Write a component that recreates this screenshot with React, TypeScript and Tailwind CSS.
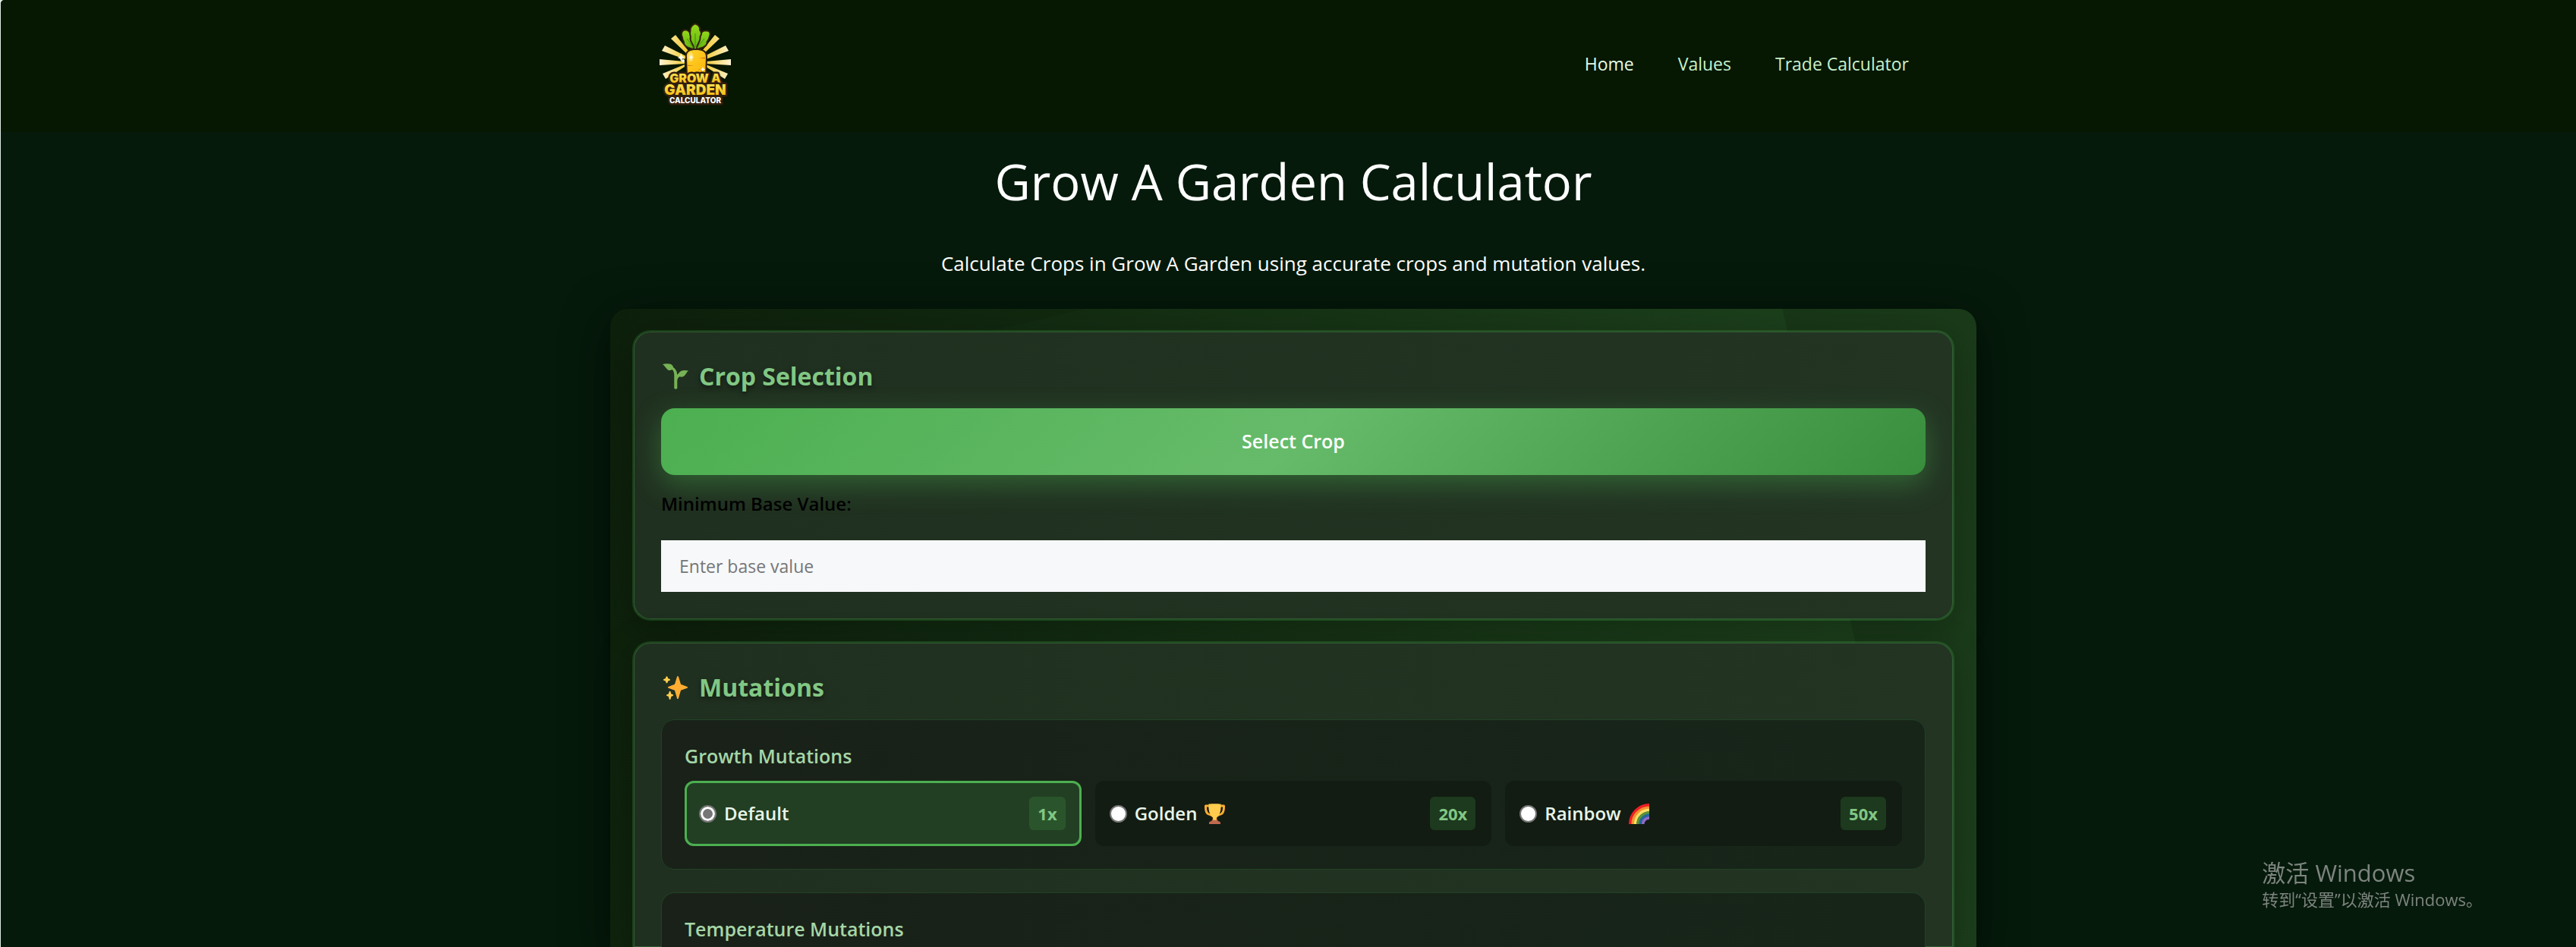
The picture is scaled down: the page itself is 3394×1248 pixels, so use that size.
import { useState } from "react";
import type { ReactNode } from "react";

function Logo() {
  const rays = [
    "M40 46 L20 27 L26 22 L43 43Z",
    "M38 54 L8 43 L12 36 L40 50Z",
    "M38 60 L5 62 L5 54 L38 57Z",
    "M38 64 L13 80 L9 73 L38 61Z",
  ];
  return (
    <svg viewBox="0 0 104 120" className="h-[120px] w-[104px]" role="img" aria-label="Grow A Garden Calculator">
      <defs>
        <linearGradient id="ray" gradientUnits="userSpaceOnUse" x1="5" y1="0" x2="42" y2="0">
          <stop offset="0" stopColor="#fdf3d3" />
          <stop offset="0.5" stopColor="#f7dd7c" />
          <stop offset="1" stopColor="#f3c92c" />
        </linearGradient>
        <linearGradient id="root-fill" x1="0" y1="0" x2="1" y2="1">
          <stop offset="0" stopColor="#ffd32c" />
          <stop offset="1" stopColor="#fbb50a" />
        </linearGradient>
        <linearGradient id="leaf" x1="0" y1="0" x2="0" y2="1">
          <stop offset="0" stopColor="#93d81a" />
          <stop offset="1" stopColor="#62b510" />
        </linearGradient>
        <linearGradient id="word" x1="0" y1="0" x2="0" y2="1">
          <stop offset="0.2" stopColor="#fbe14a" />
          <stop offset="0.9" stopColor="#f8b90e" />
        </linearGradient>
      </defs>
      <g fill="url(#ray)">
        {rays.map((d) => (
          <path key={d} d={d} />
        ))}
        <g transform="translate(104 0) scale(-1 1)">
          {rays.map((d) => (
            <path key={d} d={d} />
          ))}
        </g>
      </g>
      <g fill="url(#leaf)" stroke="#33200f" strokeWidth="4" strokeLinejoin="round" paintOrder="stroke">
        <path d="M49.500 40 C44 38 38.500 37 38 32.500 C38.500 30 35.500 28 36 25 C34 21 35 17 38.500 16.500 C42 16 44.500 19 44.500 22 C47.500 25 46.500 28 47.500 31 C49 34 50 37 49.500 40Z" />
        <path d="M54 40 C60 38 66 37 66.500 32.500 C66 30 69.500 28 69.500 25 C71.500 21 71 17.500 67 17.500 C63 17 60 19 60 23 C57 26 57.500 28 57 31 C55 34 54 37 54 40Z" />
        <path d="M51 40 C51 34 47 32 46.500 27 C48 24 45 21 46.500 17 C46 12 49 10 51.500 8.500 C55 9 58 12 57 16 C60 19 59 22 57.500 24 C58.500 30 53 34 53 40Z" />
      </g>
      <path d="M52 20V39M41 27L50 39M64 27L54 39" fill="none" stroke="#3d7d10" strokeWidth="0.800" />
      <path
        d="M42 76 L41 52 C40 44 45 42 53 42 C61 42 66.500 44 66 52 L65 76Z"
        fill="url(#root-fill)"
        stroke="#33200f"
        strokeWidth="4"
        paintOrder="stroke"
      />
      <path d="M41.500 61.500 L51 62.500 L41.500 63Z M65.500 51.500 L57 52.500 L65 53.500Z M63 69L55 67L63 67Z" fill="#d97f14" />
      <ellipse cx="46" cy="51" rx="3.500" ry="6" fill="#ffe583" opacity="0.800" />
      <path
        d="M33.500 46 L35 50 L38 52 L35 53.500 L33.500 57 L32 53.500 L29 52 L32 50Z M46.500 48 L47.500 50.500 L50 51.500 L47.500 52.500 L46.500 55 L45.500 52.500 L43 51.500 L45.500 50.500Z M62 64 L63 66.500 L65.500 67.500 L63 68.500 L62 71 L61 68.500 L58.500 67.500 L61 66.500Z"
        fill="#fffbe6"
      />
      <circle cx="36" cy="56" r="2" fill="#fffbe6" />
      <g
        fontFamily="Inter, sans-serif"
        fontWeight="900"
        textAnchor="middle"
        stroke="#33200f"
        strokeWidth="5"
        strokeLinejoin="round"
        paintOrder="stroke"
      >
        <text x="52" y="85" fontSize="16" fill="url(#word)">
          GROW A
        </text>
        <text x="52" y="101" fontSize="19" fill="url(#word)">
          GARDEN
        </text>
        <text x="52" y="112" fontSize="10" fontWeight="800" fill="#ffffff">
          CALCULATOR
        </text>
      </g>
    </svg>
  );
}

function SproutIcon() {
  return (
    <svg viewBox="0 0 34 34" className="ml-0.5 size-[34px]" aria-hidden="true">
      <path
        fill="#77b255"
        d="M0 1 C4 0 8 0 11 1 C13 2 14 4 14 5 C17 7 19 10 19.300 15 C20.500 13.500 21.500 12.500 22 12 C23 10 26 9 29 9 L34 9.500 C32 11 31 14 29 16 C27 18 24 18 22.500 17.300 C20.500 18.500 19.300 20.500 19.300 23 L19.300 33 Q17.300 34.500 15.300 33 L15.300 16 C15.300 12 14.500 9.500 12.500 8 C10.500 9.600 7.500 9.500 6 7.500 C4 5.500 2.500 3 0 1Z"
      />
    </svg>
  );
}

function SparklesIcon() {
  return (
    <svg viewBox="0 0 36 36" className="ml-0.5 size-[34px]" aria-hidden="true">
      <path
        fill="#ffac33"
        d="M34.347 16.893l-8.899-3.294-3.323-10.891c-.128-.42-.517-.708-.956-.708-.439 0-.828.288-.956.708l-3.322 10.891-8.900 3.294c-.393.146-.653.519-.653.938 0 .418.260.793.653.938l8.895 3.293 3.324 11.223c.126.424.516.715.959.715.442 0 .833-.291.959-.716l3.324-11.223 8.896-3.293c.391-.144.652-.518.652-.937 0-.418-.261-.792-.653-.938z"
      />
      <path
        fill="#ffcc4d"
        d="M14.347 27.894l-2.314-.856-.9-3.300c-.118-.436-.513-.738-.964-.738-.451 0-.846.302-.965.737l-.9 3.300-2.313.856c-.393.146-.653.520-.653.938 0 .418.260.793.653.938l2.301.853.907 3.622c.112.444.511.756.970.756.459 0 .858-.312.970-.757l.907-3.622 2.301-.853c.393-.144.653-.519.653-.937 0-.418-.260-.792-.653-.937zM10.009 6.231l-2.364-.875-.876-2.365c-.145-.393-.519-.653-.938-.653-.418 0-.792.260-.938.653l-.875 2.365-2.365.875c-.393.146-.653.520-.653.938 0 .418.260.793.653.938l2.365.875.875 2.365c.146.393.520.653.938.653.418 0 .792-.260.938-.653l.875-2.365 2.365-.875c.393-.146.653-.520.653-.938 0-.418-.260-.792-.653-.938z"
      />
    </svg>
  );
}

function TrophyIcon() {
  return (
    <svg viewBox="0 0 36 36" className="size-[27px]" aria-hidden="true">
      <path
        fill="#ffac33"
        fillRule="evenodd"
        d="M7 2H2C.8 2 0 3 0 5c0 9 2 15 9 16l4 2 1-4C6 18 4 14 4 6h4zM29 2h5c1.200 0 2 1 2 3 0 9-2 15-9 16l-4 2-1-4c8-1 10-5 10-13h-4z"
      />
      <path fill="#ffac33" d="M14 22h8c-1 3-.5 6 1 10H13c1.500-4 2-7 1-10z" />
      <path fill="#ffcc4d" d="M7 1C8 0 28 0 29 1c0 12-2 18-6 22-2 2-3 3-3 7h-4c0-4-1-5-3-7C9 19 7 13 7 1z" />
      <path fill="#c1694f" d="M8 36v-2c0-2 2-3 4-3 0-1 1-2 2-2h8c1 0 2 1 2 2 2 0 4 1 4 3v2z" />
    </svg>
  );
}

function RainbowIcon() {
  const bands = [
    { r: 33.5, c: "#ee1f26" },
    { r: 29, c: "#f59331" },
    { r: 24.5, c: "#ffdf63" },
    { r: 20, c: "#5c913b" },
    { r: 15.5, c: "#226798" },
    { r: 11, c: "#9268ca" },
  ];
  return (
    <svg viewBox="0 0 36 36" className="size-[27px]" aria-hidden="true">
      {bands.map(({ r, c }) => (
        <circle key={c} cx="36" cy="36" r={r} fill="none" stroke={c} strokeWidth="5" />
      ))}
    </svg>
  );
}

function Card({ icon, title, className = "", children }: { icon: ReactNode; title: string; className?: string; children: ReactNode }) {
  return (
    <section
      className={`relative flex flex-col border-2 border-[#4caf50]/20 bg-linear-to-r from-[#203020] to-[#233423] bg-clip-padding px-9 pt-9 shadow-[inset_0_0_0_1px_rgba(76,175,80,0.35),0_12px_48px_rgba(0,0,0,0.25)] ${className}`}
    >
      <h2 className="mb-5 flex items-center gap-3.5 text-[32px] leading-[45px] font-bold text-[#81c784] [text-shadow:0_3px_6px_rgba(0,0,0,0.5)]">
        {icon}
        {title}
      </h2>
      {children}
    </section>
  );
}

const growthOptions: { id: string; name: string; factor: string; icon?: ReactNode }[] = [
  { id: "default", name: "Default", factor: "1x" },
  { id: "golden", name: "Golden", factor: "20x", icon: <TrophyIcon /> },
  { id: "rainbow", name: "Rainbow", factor: "50x", icon: <RainbowIcon /> },
];

const groupBase = "border border-[#204224] bg-linear-to-r from-[#192118] to-[#172519] px-[30px] pt-[30px]";
const groupTitle = "text-[25px] leading-[34px] font-semibold text-[#a5d6a7]";

export default function App() {
  const [growth, setGrowth] = useState("default");
  const [baseValue, setBaseValue] = useState("");

  return (
    <div className="bg-[#dfe9e2] font-['Open_Sans','Noto_Sans_CJK_SC',sans-serif]">
      <div className="ml-px flex min-h-screen flex-col overflow-hidden rounded-tl-[5px] bg-[#051a0b]">
        <header className="bg-[#061702] pt-6 pb-[30px] pl-[13px]">
          <div className="mx-auto flex max-w-[1680px] items-center justify-between">
            <a href="#home">
              <Logo />
            </a>
            <nav className="flex text-[23px] leading-9 text-[#c8f0cb]">
              <a href="#home" className="px-[29px] text-[#e3fbe6]">
                Home
              </a>
              <a href="#values" className="px-[29px]">
                Values
              </a>
              <a href="#trade" className="px-[29px]">
                Trade Calculator
              </a>
            </nav>
          </div>
        </header>

        <main className="flex grow flex-col pl-[13px]">
          <h1 className="pt-[17px] text-center text-[65px] leading-[96px] text-white">Grow A Garden Calculator</h1>
          <p className="mt-10 mb-10 text-center text-[26px] leading-10 text-white">
            Calculate Crops in Grow A Garden using accurate crops and mutation values.
          </p>

          <div className="relative mx-auto flex w-full max-w-[1800px] grow flex-col gap-[27px] rounded-t-3xl bg-linear-105 from-[#0d200b] to-[#1c3e1b] px-[29px] pt-7 shadow-[0_12px_60px_rgba(0,0,0,0.5)]">
            <div className="absolute inset-0 rounded-t-3xl bg-linear-to-r from-transparent to-[#4caf50]/8 [clip-path:polygon(34.8%_0,85.8%_0,96%_100%,0_100%,0_17.4%)]" />

            <Card icon={<SproutIcon />} title="Crop Selection" className="rounded-3xl pb-9">
              <button
                type="button"
                className="h-[88px] rounded-[18px] bg-linear-135 from-[#4caf50] via-[#66bb6a] to-[#388e3c] text-[25px] font-semibold text-white shadow-[0_12px_36px_rgba(76,175,80,0.4)]"
              >
                Select Crop
              </button>
              <label htmlFor="base-value" className="mt-5 mb-[30px] text-2xl leading-9 font-semibold text-black">
                Minimum Base Value:
              </label>
              <input
                id="base-value"
                type="text"
                value={baseValue}
                onChange={(e) => setBaseValue(e.target.value)}
                placeholder="Enter base value"
                className="h-[68px] bg-[#f7f8fa] px-6 text-[23px] text-black placeholder:text-[#757575]"
              />
            </Card>

            <Card icon={<SparklesIcon />} title="Mutations" className="grow rounded-t-3xl border-b-0">
              <fieldset className={`${groupBase} rounded-[18px] pb-[30px]`}>
                <h3 className={groupTitle}>Growth Mutations</h3>
                <div className="mt-4 grid grid-cols-3 gap-[18px]">
                  {growthOptions.map((o) => (
                    <label
                      key={o.id}
                      className="flex h-[86px] items-center rounded-xl border-3 border-transparent bg-[#121c12] bg-clip-border pr-[18px] pl-4 text-2xl font-semibold text-[#e8f5e9] has-checked:border-[#4caf50] has-checked:bg-[#223f23]"
                    >
                      <input
                        type="radio"
                        name="growth"
                        checked={growth === o.id}
                        onChange={() => setGrowth(o.id)}
                        className="mr-2.5 size-[23px] appearance-none rounded-full border-2 border-[#767676] bg-white checked:bg-[#767676] checked:shadow-[inset_0_0_0_3px_#fff]"
                      />
                      <span className="mr-2.5">{o.name}</span>
                      {o.icon}
                      <span className="ml-auto rounded-md bg-[#4caf50]/20 px-[11px] text-[22px] leading-[44px] font-bold text-[#81c784]">
                        {o.factor}
                      </span>
                    </label>
                  ))}
                </div>
              </fieldset>

              <div className={`${groupBase} mt-[30px] grow rounded-t-[18px] border-b-0`}>
                <h3 className={groupTitle}>Temperature Mutations</h3>
              </div>
            </Card>
          </div>
        </main>
      </div>

      <aside className="pointer-events-none fixed right-[123px] bottom-12 text-[#7d847e]">
        <p className="text-[31px] leading-10">激活 Windows</p>
        <p className="text-[22px] leading-[30px]">转到“设置”以激活 Windows。</p>
      </aside>
    </div>
  );
}
